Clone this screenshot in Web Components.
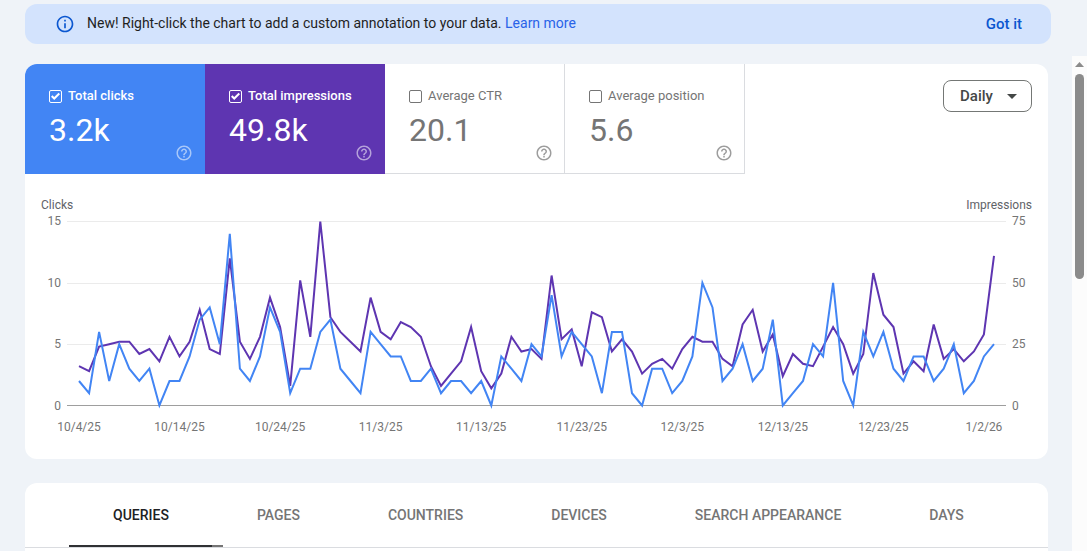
<!DOCTYPE html>
<html lang="en">
<head>
<meta charset="utf-8">
<meta name="viewport" content="width=device-width, initial-scale=1">
<title>Performance</title>
<style>
  html, body { height: 100%; }
  body {
    margin: 0;
    overflow: hidden;
    background: #eff3f8;
    font-family: Roboto, "Liberation Sans", sans-serif;
  }
</style>
</head>
<body>
<performance-page>
  <info-banner slot="banner">
    New! Right-click the chart to add a custom annotation to your data. <a href="#annotations">Learn more</a>
    <span slot="action">Got it</span>
  </info-banner>

  <surface-card>
    <metric-bar>
      <metric-tile label="Total clicks" value="3.2k" color="#4285f4" checked></metric-tile>
      <metric-tile label="Total impressions" value="49.8k" color="#5e35b1" checked></metric-tile>
      <metric-tile label="Average CTR" value="20.1"></metric-tile>
      <metric-tile label="Average position" value="5.6"></metric-tile>
      <interval-select slot="end"></interval-select>
    </metric-bar>
    <line-chart></line-chart>
  </surface-card>

  <surface-card>
    <dimension-tabs tabs="QUERIES,PAGES,COUNTRIES,DEVICES,SEARCH APPEARANCE,DAYS"></dimension-tabs>
  </surface-card>
</performance-page>

<script>
class PerformancePage extends HTMLElement {
  constructor() {
    super();
    this.attachShadow({ mode: "open" });
    this.shadowRoot.innerHTML = `
      <style>
        :host {
          display: flex;
          flex-direction: column;
          gap: 12px;
          height: 100%;
          box-sizing: border-box;
          padding-top: 4px;
        }
        header { padding: 0 36px 0 25px; }
        .scroller {
          flex: 1;
          min-height: 0;
          display: flex;
          overflow: hidden;
        }
        main {
          flex: 1;
          min-width: 0;
          display: flex;
          flex-direction: column;
          gap: 24px;
          padding: 8px 24px 0 25px;
        }
      </style>
      <header><slot name="banner"></slot></header>
      <div class="scroller">
        <main><slot></slot></main>
        <scroll-rail></scroll-rail>
      </div>
    `;
  }
}

class ScrollRail extends HTMLElement {
  constructor() {
    super();
    this.attachShadow({ mode: "open" });
    this.shadowRoot.innerHTML = `
      <style>
        :host {
          display: flex;
          flex-direction: column;
          align-items: center;
          gap: 7px;
          width: 15px;
          padding-top: 6px;
          box-sizing: border-box;
          background: #fcfcfc;
        }
        svg { display: block; flex: none; }
        .thumb {
          width: 9px;
          height: 42%;
          border-radius: 5px;
          background: #8b8b8b;
        }
      </style>
      <svg width="9" height="5" viewBox="0 0 9 5" aria-hidden="true"><path d="M4.5 0 9 5H0z" fill="#8b8b8b"/></svg>
      <div class="thumb"></div>
    `;
  }
}

class InfoBanner extends HTMLElement {
  constructor() {
    super();
    this.attachShadow({ mode: "open" });
    this.shadowRoot.innerHTML = `
      <style>
        :host {
          display: flex;
          align-items: center;
          gap: 12px;
          height: 40px;
          box-sizing: border-box;
          padding: 0 29px 0 30px;
          border-radius: 12px;
          background: #d3e3fd;
          color: #1f1f1f;
          font-size: 14px;
          line-height: 20px;
        }
        svg { flex: none; }
        p { flex: 1; margin: 0 0 2px; }
        ::slotted(a) { color: #2962e8; text-decoration: none; }
        button {
          border: 0;
          padding: 0;
          background: none;
          color: #0b57d0;
          font: 500 15px/20px Roboto, sans-serif;
          cursor: pointer;
        }
      </style>
      <svg width="20" height="20" viewBox="0 0 24 24" fill="#0b57d0" aria-hidden="true">
        <path d="M11 7h2v2h-2zm0 4h2v6h-2zm1-9C6.48 2 2 6.48 2 12s4.480 10 10 10 10-4.480 10-10S17.520 2 12 2zm0 18c-4.410 0-8-3.590-8-8s3.590-8 8-8 8 3.590 8 8-3.590 8-8 8z"/>
      </svg>
      <p><slot></slot></p>
      <button type="button"><slot name="action"></slot></button>
    `;
  }
}

class SurfaceCard extends HTMLElement {
  constructor() {
    super();
    this.attachShadow({ mode: "open" });
    this.shadowRoot.innerHTML = `
      <style>
        :host {
          display: block;
          flex: none;
          overflow: hidden;
          border-radius: 12px;
          background: #fff;
        }
      </style>
      <slot></slot>
    `;
  }
}

class MetricBar extends HTMLElement {
  constructor() {
    super();
    this.attachShadow({ mode: "open" });
    this.shadowRoot.innerHTML = `
      <style>
        :host {
          display: flex;
          justify-content: space-between;
          align-items: flex-start;
        }
        .tiles { display: flex; }
        .end { padding: 16px 16px 0 0; }
      </style>
      <div class="tiles"><slot></slot></div>
      <div class="end"><slot name="end"></slot></div>
    `;
  }
}

class MetricTile extends HTMLElement {
  constructor() {
    super();
    this.attachShadow({ mode: "open" });
  }

  connectedCallback() {
    const label = this.getAttribute("label");
    const checked = this.hasAttribute("checked");
    const color = this.getAttribute("color") || "#fff";
    const edge = checked ? color : "#dadce0";

    this.shadowRoot.innerHTML = `
      <style>
        :host {
          display: flex;
          flex-direction: column;
          width: 180px;
          height: 110px;
          box-sizing: border-box;
          padding: 22px 11px 12px 24px;
          border-right: 1px solid ${edge};
          border-bottom: 1px solid ${edge};
          background: ${color};
          color: ${checked ? "#fff" : "#757575"};
        }
        label {
          display: flex;
          align-items: center;
          gap: 6px;
          font-size: 13px;
          line-height: 20px;
          font-weight: ${checked ? 500 : 400};
        }
        input {
          appearance: none;
          display: grid;
          place-items: center;
          width: 13px;
          height: 13px;
          margin: 1px 0 0;
          border: 1px solid ${checked ? "#fff" : "#757575"};
          border-radius: 2px;
        }
        input:checked::before {
          content: "";
          width: 9px;
          height: 9px;
          background: #fff;
          clip-path: polygon(0 52%, 16% 36%, 36% 56%, 84% 8%, 100% 24%, 36% 88%);
        }
        output {
          margin-top: 3px;
          font-size: 32px;
          line-height: 42px;
        }
        button {
          align-self: flex-end;
          display: block;
          margin-top: -7px;
          padding: 0;
          border: 0;
          background: none;
          color: inherit;
          opacity: ${checked ? ".54" : ".7"};
        }
        svg { display: block; }
      </style>
      <label><input type="checkbox" ${checked ? "checked" : ""}>${label}</label>
      <output>${this.getAttribute("value")}</output>
      <button type="button" aria-label="About ${label}">
        <svg width="18" height="18" viewBox="0 0 24 24" fill="currentColor" aria-hidden="true">
          <path d="M11 18h2v-2h-2v2zm1-16C6.480 2 2 6.480 2 12s4.480 10 10 10 10-4.480 10-10S17.520 2 12 2zm0 18c-4.410 0-8-3.590-8-8s3.590-8 8-8 8 3.590 8 8-3.590 8-8 8zm0-14c-2.210 0-4 1.790-4 4h2c0-1.100.9-2 2-2s2 .9 2 2c0 2-3 1.750-3 5h2c0-2.250 3-2.500 3-5 0-2.210-1.790-4-4-4z"/>
        </svg>
      </button>
    `;
  }
}

class IntervalSelect extends HTMLElement {
  constructor() {
    super();
    this.attachShadow({ mode: "open" });
    this.shadowRoot.innerHTML = `
      <style>
        :host {
          display: grid;
          align-items: center;
          color: #444746;
        }
        select, svg { grid-area: 1 / 1; }
        select {
          appearance: none;
          width: 89px;
          height: 32px;
          padding: 0 32px 0 16px;
          border: 1px solid #747775;
          border-radius: 8px;
          background: #fff;
          color: inherit;
          font: 500 15px/20px Roboto, sans-serif;
        }
        svg {
          justify-self: end;
          margin-right: 15px;
          pointer-events: none;
        }
      </style>
      <select aria-label="Interval">
        <option>Daily</option>
        <option>Weekly</option>
        <option>Monthly</option>
      </select>
      <svg width="10" height="5" viewBox="0 0 10 5" fill="currentColor" aria-hidden="true"><path d="M0 0h10L5 5z"/></svg>
    `;
  }
}

const CLICKS = [
  2, 1, 6, 2, 5, 3, 2, 3, 0, 2, 2, 4, 7, 8, 5, 14, 3, 2, 4, 8,
  6, 1, 3, 3, 6, 7, 3, 2, 1, 6, 5, 4, 4, 2, 2, 3, 1, 2, 2, 1,
  2, 0, 4, 3, 2, 5, 4, 9, 4, 6, 5, 4, 1, 6, 6, 1, 0, 3, 3, 1,
  2, 4, 10, 8, 2, 3, 5, 2, 3, 7, 0, 1, 2, 5, 4, 10, 2, 0, 6, 4,
  6, 3, 2, 4, 4, 2, 3, 5, 1, 2, 4, 5
];

const IMPRESSIONS = [
  16, 14, 24, 25, 26, 26, 21, 23, 18, 28, 20, 26, 39, 23, 21, 60, 26, 19, 28, 44,
  32, 8, 51, 28, 75, 36, 30, 26, 22, 44, 30, 27, 34, 32, 28, 16, 8, 13, 18, 32,
  14, 7, 13, 28, 22, 23, 19, 53, 27, 31, 16, 38, 36, 22, 27, 22, 13, 17, 19, 15,
  23, 28, 26, 26, 19, 16, 33, 39, 22, 29, 12, 21, 17, 16, 24, 32, 25, 13, 21, 54,
  37, 32, 13, 18, 14, 33, 19, 23, 18, 22, 29, 61
];

const DATES = [
  "10/4/25", "10/14/25", "10/24/25", "11/3/25", "11/13/25",
  "11/23/25", "12/3/25", "12/13/25", "12/23/25", "1/2/26"
];

class LineChart extends HTMLElement {
  constructor() {
    super();
    this.attachShadow({ mode: "open" });
    this.plotHeight = 184;
    this.inset = 12;
  }

  connectedCallback() {
    const ticks = values => values.map(v => `<span>${v}</span>`).join("");

    this.shadowRoot.innerHTML = `
      <style>
        :host {
          display: block;
          padding: 21px 16px 22px;
          color: #757575;
          font-size: 12px;
          line-height: 20px;
        }
        .titles {
          display: flex;
          justify-content: space-between;
          color: #5f6368;
        }
        .body {
          display: grid;
          grid-template-columns: 20px 1fr 20px;
          column-gap: 6px;
          margin-top: 6px;
        }
        .axis {
          display: flex;
          flex-direction: column;
          justify-content: space-between;
          height: 185px;
        }
        .axis span {
          display: flex;
          align-items: center;
          height: 0;
        }
        .left span { justify-content: flex-end; }
        svg {
          display: block;
          width: 100%;
          height: 185px;
          overflow: visible;
        }
        .grid { stroke: #ebebeb; shape-rendering: crispEdges; }
        .base { stroke: #9e9e9e; shape-rendering: crispEdges; }
        polyline { fill: none; stroke-width: 2; stroke-linejoin: miter; }
        .dates {
          grid-column: 2;
          display: flex;
          justify-content: space-between;
          padding: 11px 22px 0 12px;
        }
        .dates span {
          display: flex;
          justify-content: center;
          width: 0;
          white-space: nowrap;
        }
      </style>
      <div class="titles"><span>Clicks</span><span>Impressions</span></div>
      <div class="body">
        <div class="axis left">${ticks([15, 10, 5, 0])}</div>
        <svg role="img" aria-label="Clicks and impressions by day"></svg>
        <div class="axis">${ticks([75, 50, 25, 0])}</div>
        <div class="dates">${ticks(DATES)}</div>
      </div>
    `;

    this.observer = new ResizeObserver(() => this.draw());
    this.observer.observe(this);
    this.draw();
  }

  disconnectedCallback() {
    this.observer.disconnect();
  }

  points(values, max, width) {
    const step = (width - this.inset * 2) / (values.length - 1);
    return values.map((v, i) => {
      const x = this.inset + i * step;
      const y = this.plotHeight * (1 - v / max) + 0.5;
      return `${x.toFixed(1)},${y.toFixed(1)}`;
    }).join(" ");
  }

  draw() {
    const svg = this.shadowRoot.querySelector("svg");
    const width = svg.getBoundingClientRect().width;
    if (!width) return;

    let lines = "";
    for (let i = 0; i <= 3; i++) {
      const y = Math.ceil(this.plotHeight * i / 3) + 0.5;
      lines += `<line class="${i === 3 ? "base" : "grid"}" x1="0" x2="${width}" y1="${y}" y2="${y}"/>`;
    }
    svg.innerHTML = `
      ${lines}
      <polyline stroke="#5e35b1" points="${this.points(IMPRESSIONS, 75, width)}"/>
      <polyline stroke="#4285f4" points="${this.points(CLICKS, 15, width)}"/>
    `;
  }
}

class DimensionTabs extends HTMLElement {
  constructor() {
    super();
    this.attachShadow({ mode: "open" });
  }

  connectedCallback() {
    const tabs = this.getAttribute("tabs").split(",");

    this.shadowRoot.innerHTML = `
      <style>
        :host {
          display: block;
          min-height: 96px;
        }
        nav {
          display: flex;
          padding: 0 44px;
          border-bottom: 1px solid #dadce0;
        }
        button {
          position: relative;
          height: 64px;
          padding: 0 44px;
          border: 0;
          background: none;
          color: #757575;
          font: 500 14px/20px Roboto, sans-serif;
          white-space: nowrap;
          cursor: pointer;
        }
        button[aria-selected="true"] { color: #202124; }
        button[aria-selected="true"]::after {
          content: "";
          position: absolute;
          left: 0;
          right: -10px;
          bottom: 0;
          height: 2px;
          box-sizing: border-box;
          border-right: 11px solid #757575;
          background: #303134;
        }
      </style>
      <nav role="tablist">
        ${tabs.map((t, i) => `<button type="button" role="tab" aria-selected="${i === 0}">${t}</button>`).join("")}
      </nav>
    `;
  }
}

customElements.define("scroll-rail", ScrollRail);
customElements.define("performance-page", PerformancePage);
customElements.define("info-banner", InfoBanner);
customElements.define("surface-card", SurfaceCard);
customElements.define("metric-bar", MetricBar);
customElements.define("metric-tile", MetricTile);
customElements.define("interval-select", IntervalSelect);
customElements.define("line-chart", LineChart);
customElements.define("dimension-tabs", DimensionTabs);
</script>
</body>
</html>
